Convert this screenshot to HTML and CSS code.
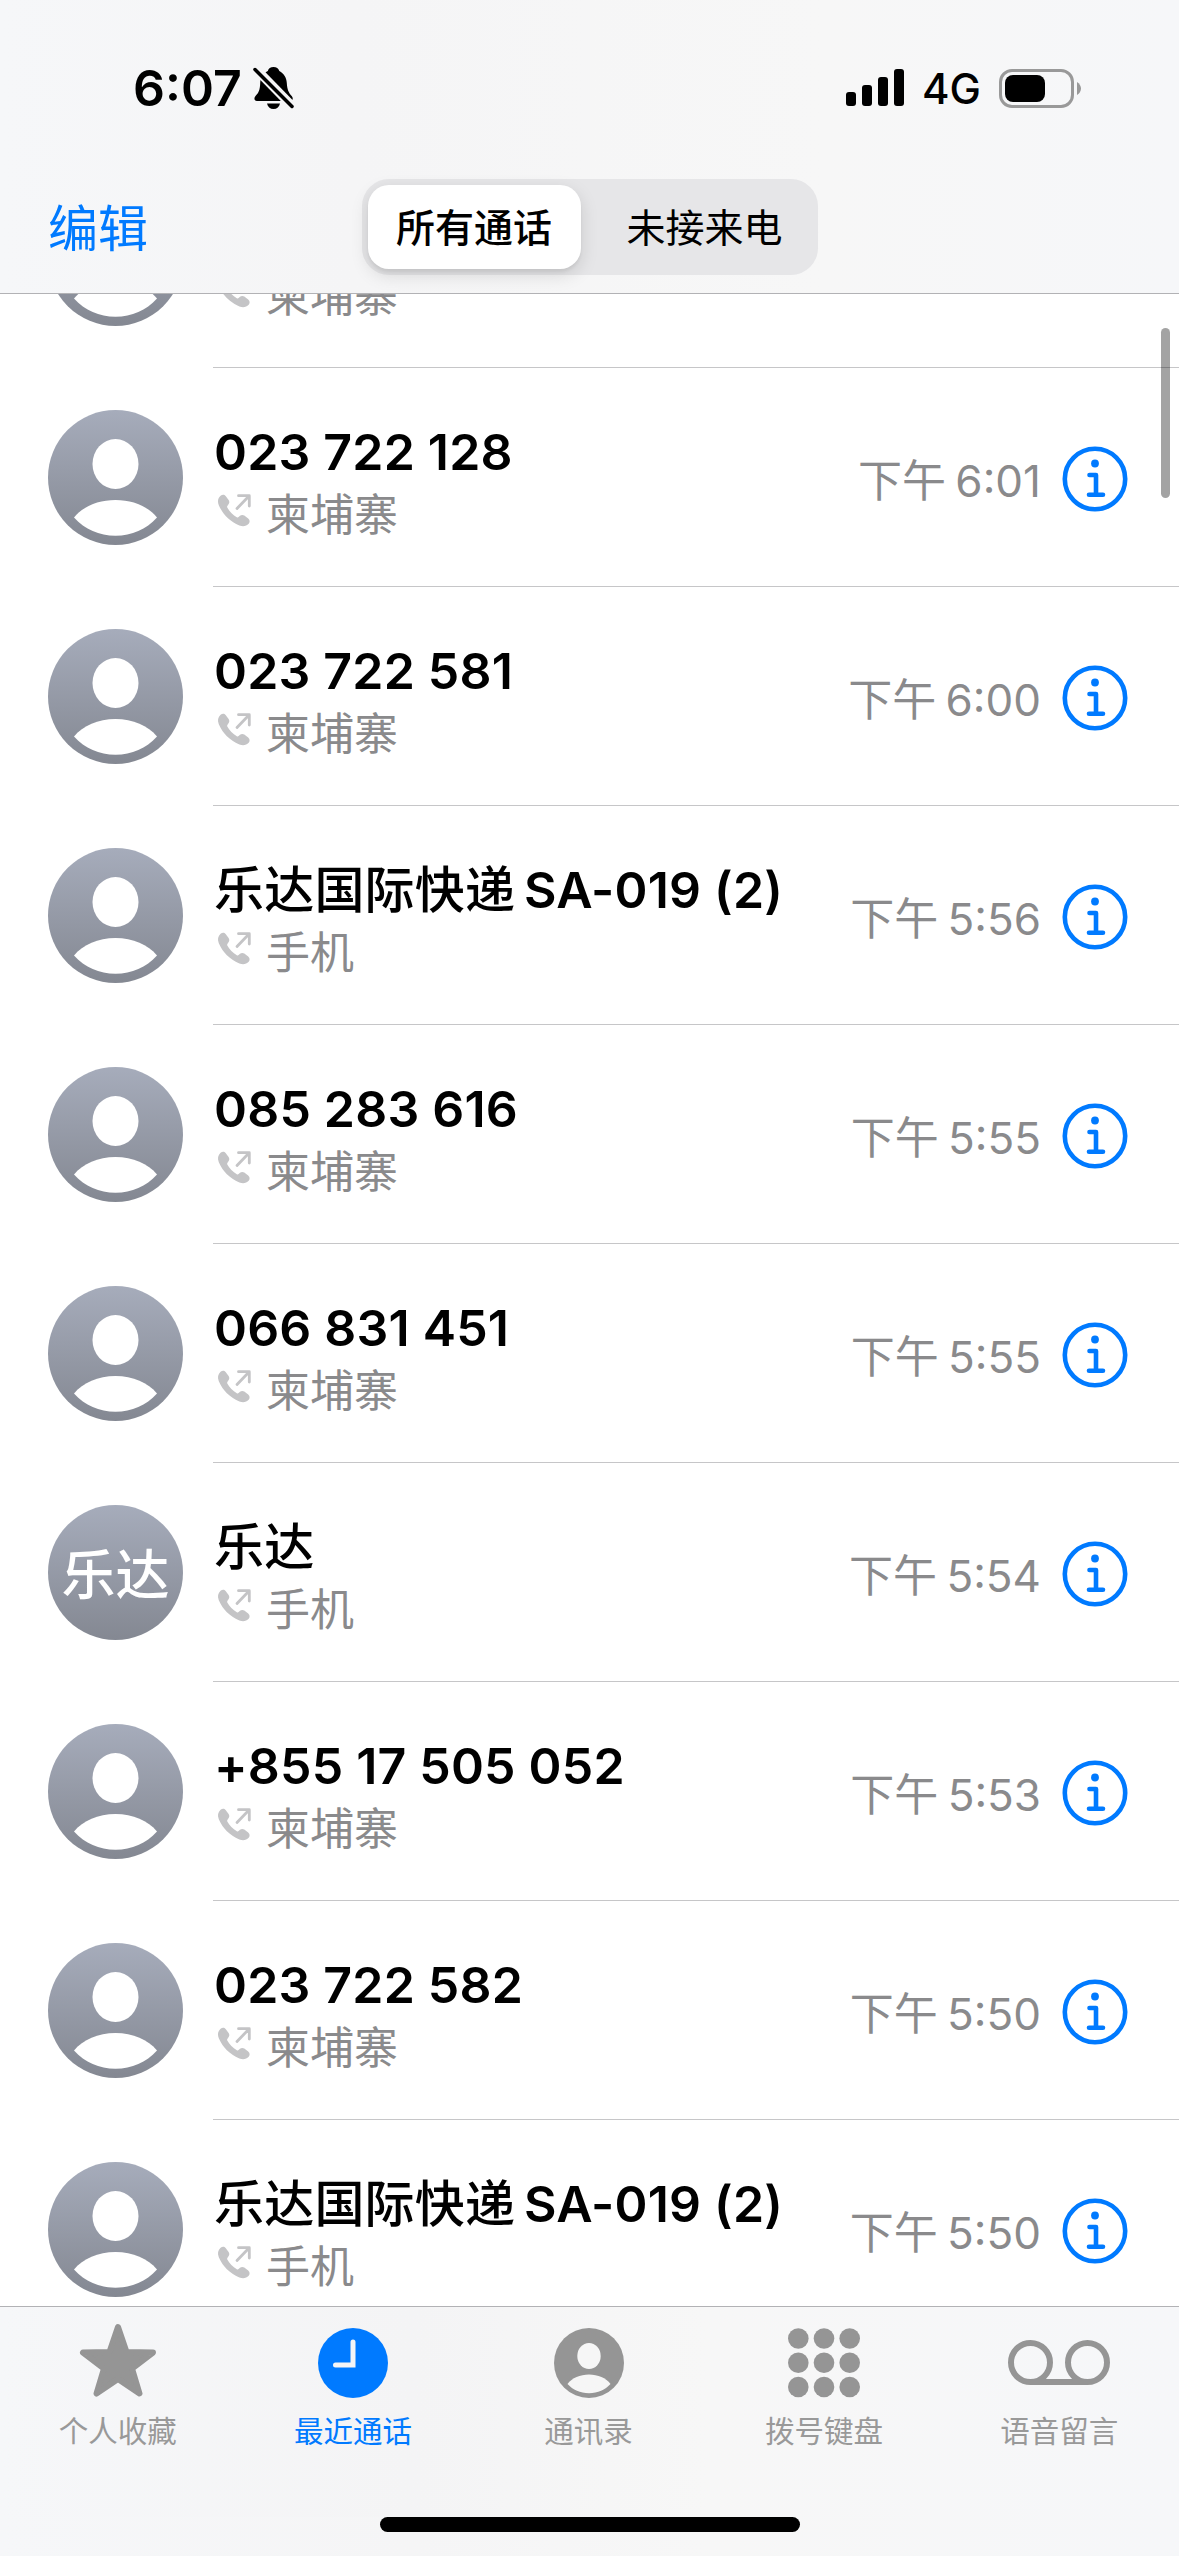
FILE: index.html
```
<!DOCTYPE html>
<html lang="zh-CN">
<head>
  <meta charset="UTF-8">
  <title>最近通话</title>
  <link rel="stylesheet" href="styles.css">
</head>
<body>

  <!-- shared icons -->
  <svg class="defs" width="0" height="0">
    <defs>
      <symbol id="person" viewBox="0 0 135 135">
        <ellipse cx="67.5" cy="54" rx="23" ry="25"/>
        <path d="M26 107.5C35 96.5 50 90 67.5 90S100 96.5 109 107.5C98 119.5 84 125.7 67.5 125.7S37 119.5 26 107.5Z"/>
      </symbol>
      <symbol id="outgoing" viewBox="0 0 34 34">
        <path d="M3.600 1.800C5.200 .3 7.400 .3 8.600 2L11.600 6C12.600 7.600 12.500 9 11.500 10.300L10.500 11.700C10 12.300 10 12.900 10.300 13.500C12.300 17.300 16 21.200 19.800 23.200C20.500 23.600 21.100 23.500 21.600 23L23 21.800C24.400 20.700 25.900 20.700 27.300 21.600L31.200 24.400C32.900 25.800 33.100 28.200 31.700 29.700C29.300 32.200 26.100 32.900 22.400 31.400C12.500 27.200 5.800 20.300 1.800 11.200C.2 7.300 1 4.200 3.600 1.800Z"/>
        <path class="arrow" d="M20 14.500L32 2M21.500 1.700H32.300V12"/>
      </symbol>
      <symbol id="info" viewBox="0 0 66 66">
        <circle class="line" cx="33" cy="33" r="30.200"/>
        <circle cx="33" cy="17.500" r="3.900"/>
        <path class="line" d="M27.500 29H34V48.500M27 48.700H41"/>
      </symbol>
    </defs>
  </svg>

  <header class="nav">
    <div class="status">
      <div class="clock">
        <span>6:07</span>
        <svg class="bell" width="42" height="44" viewBox="0 0 42 44">
          <path d="M20.500 1C17.500 1 15.500 2.500 14.800 5C10 7.500 7.500 11.500 7.200 17C7 24 5.500 27 2.500 30C.8 31.800 1 35 4 35H37C40 35 40.500 32 38.700 30C35.500 26.500 34.200 23.500 33.800 17C33.500 11.500 31 7.500 26.300 5C25.500 2.500 23.500 1 20.500 1Z"/>
          <path d="M14 37.500H27C26.300 41 24 43 20.500 43S14.700 41 14 37.500Z"/>
          <path class="gap" d="M2 2L40 41"/>
          <path class="slash" d="M2 3.500L39 40.500"/>
        </svg>
      </div>
      <div class="signals">
        <svg class="bars" width="58" height="38" viewBox="0 0 58 38">
          <rect x="0" y="23" width="10" height="14" rx="3"/>
          <rect x="16" y="16" width="10" height="21" rx="3"/>
          <rect x="32" y="8" width="10" height="29" rx="3"/>
          <rect x="48" y="0" width="10" height="37" rx="3"/>
        </svg>
        <span class="network">4G</span>
        <svg class="battery" width="83" height="39" viewBox="0 0 83 39">
          <rect class="shell" x="1.500" y="1.500" width="72" height="36" rx="11.500"/>
          <rect x="6" y="6" width="40" height="27" rx="8"/>
          <path class="tip" d="M78 13C80.500 14.500 82 17 82 19.500S80.500 24.500 78 26Z"/>
        </svg>
      </div>
    </div>
    <div class="toolbar">
      <a class="edit">编辑</a>
      <div class="segment">
        <span class="active">所有通话</span>
        <span>未接来电</span>
      </div>
    </div>
  </header>

  <main class="content">
    <ul class="calls" id="calls"></ul>
    <div class="scrollbar"></div>
  </main>

  <nav class="tabbar">
    <div class="tab">
      <svg width="78" height="76" viewBox="0 0 78 76">
        <path class="star" d="M39 4L47.500 29L74 29.500L53 45.500L60.500 70.500L39 56L17.500 70.500L25 45.500L4 29.500L30.500 29Z"/>
      </svg>
      <span>个人收藏</span>
    </div>
    <div class="tab selected">
      <svg width="70" height="76" viewBox="0 0 70 76">
        <circle cx="35" cy="40" r="35"/>
        <path class="hands" d="M35 19V42H17.500"/>
      </svg>
      <span>最近通话</span>
    </div>
    <div class="tab">
      <svg width="70" height="76" viewBox="0 0 70 76">
        <circle cx="35" cy="40" r="35"/>
        <g class="cut">
          <ellipse cx="35" cy="33" rx="11.700" ry="13"/>
          <path d="M13.500 61C18 55 26 51.500 35 51.500S52 55 56.500 61C51 67 44 70.200 35 70.200S19 67 13.500 61Z"/>
        </g>
      </svg>
      <span>通讯录</span>
    </div>
    <div class="tab">
      <svg width="74" height="76" viewBox="0 0 74 76">
        <circle cx="11.300" cy="15.500" r="10.300"/><circle cx="37" cy="15.500" r="10.300"/><circle cx="62.700" cy="15.500" r="10.300"/>
        <circle cx="11.300" cy="39.800" r="10.300"/><circle cx="37" cy="39.800" r="10.300"/><circle cx="62.700" cy="39.800" r="10.300"/>
        <circle cx="11.300" cy="64" r="10.300"/><circle cx="37" cy="64" r="10.300"/><circle cx="62.700" cy="64" r="10.300"/>
      </svg>
      <span>拨号键盘</span>
    </div>
    <div class="tab">
      <svg width="104" height="76" viewBox="0 0 104 76">
        <g class="tape">
          <circle cx="23.500" cy="39.500" r="19.500"/>
          <circle cx="80.500" cy="39.500" r="19.500"/>
          <path d="M23.500 59H80.500"/>
        </g>
      </svg>
      <span>语音留言</span>
    </div>
  </nav>
  <div class="home"><div class="indicator"></div></div>

  <script>
    // the first call is scrolled under the top bar
    const calls = [
      { name: '', label: '柬埔寨', time: '' },
      { name: '023 722 128', label: '柬埔寨', time: '下午 6:01' },
      { name: '023 722 581', label: '柬埔寨', time: '下午 6:00' },
      { name: '<b>乐达国际快递</b> SA-019 (2)', label: '手机', time: '下午 5:56' },
      { name: '085 283 616', label: '柬埔寨', time: '下午 5:55' },
      { name: '066 831 451', label: '柬埔寨', time: '下午 5:55' },
      { name: '<b>乐达</b>', label: '手机', time: '下午 5:54', initials: '乐达' },
      { name: '+855 17 505 052', label: '柬埔寨', time: '下午 5:53' },
      { name: '023 722 582', label: '柬埔寨', time: '下午 5:50' },
      { name: '<b>乐达国际快递</b> SA-019 (2)', label: '手机', time: '下午 5:50' }
    ];

    const list = document.getElementById('calls');

    calls.forEach(function (call) {
      const avatar = call.initials || '<svg width="135" height="135"><use href="#person"/></svg>';
      list.innerHTML += `
        <li class="call">
          <div class="avatar">${avatar}</div>
          <div class="row">
            <div class="who">
              <div class="name">${call.name}</div>
              <div class="label">
                <svg class="outgoing" width="34" height="34"><use href="#outgoing"/></svg>
                <span>${call.label}</span>
              </div>
            </div>
            <div class="time">${call.time}</div>
            <svg class="info" width="66" height="66"><use href="#info"/></svg>
          </div>
        </li>`;
    });
  </script>

</body>
</html>
```
FILE: styles.css
```
* {
  box-sizing: border-box;
}

body {
  margin: 0;
  width: 1179px;
  height: 2556px;
  display: flex;
  flex-direction: column;
  overflow: hidden;
  background: #fff;
  color: #000;
  font-family: Inter, "Noto Sans CJK SC", sans-serif;
  white-space: nowrap;
}

svg {
  display: block;
  flex: none;
}

.defs {
  position: absolute;
}

/* top bar */
.nav {
  flex: none;
  height: 294px;
  background: linear-gradient(90deg, #f6f7f9, #f5f5f6 30%, #f7f7f7 70%, #f6f7f9);
  border-bottom: 1px solid #b2b2b5;
}

.status {
  height: 179px;
  display: flex;
  justify-content: space-between;
  align-items: flex-start;
  padding: 66px 97px 0 133px;
}

.clock,
.signals {
  display: flex;
  align-items: center;
  height: 44px;
}

.clock {
  font-size: 50px;
  font-weight: 600;
  gap: 11px;
}

.gap {
  fill: none;
  stroke: #f5f5f6;
  stroke-width: 9;
}

.slash {
  fill: none;
  stroke: #000;
  stroke-width: 3.5;
  stroke-linecap: round;
}

.network {
  font-size: 42px;
  font-weight: 500;
  margin: 1px 18px 0;
}

.shell {
  fill: none;
  stroke: #999;
  stroke-width: 3;
}

.tip {
  fill: #999;
}

.toolbar {
  height: 96px;
  display: grid;
  grid-template-columns: 1fr 456px 1fr;
  align-items: center;
}

.edit {
  padding: 0 0 5px 48px;
  color: #007aff;
  font-size: 50px;
}

.segment {
  height: 96px;
  display: flex;
  padding: 6px;
  border-radius: 27px;
  background: #e6e6e8;
  font-size: 39px;
}

.segment span {
  flex: 1;
  height: 84px;
  line-height: 85px;
  text-align: center;
  padding-left: 17px;
}

.segment .active {
  flex: none;
  width: 213px;
  padding: 0;
  border-radius: 21px;
  background: #fff;
  font-weight: 500;
  box-shadow: 0 6px 18px rgba(0, 0, 0, .13), 0 3px 3px rgba(0, 0, 0, .05);
}

/* call list */
.content {
  flex: none;
  position: relative;
  height: 2012px;
  overflow: hidden;
}

.calls {
  list-style: none;
  margin: -145px 0 0;
  padding: 0 0 0 48px;
}

.call {
  display: flex;
  align-items: center;
  gap: 30px;
  height: 219px;
}

.avatar {
  flex: none;
  width: 135px;
  height: 135px;
  border-radius: 50%;
  background: linear-gradient(#a6acbb, #848892);
  color: #fff;
  fill: #fff;
  font-size: 54px;
  font-weight: 500;
  line-height: 142px;
  text-align: center;
}

.row {
  flex: 1;
  display: flex;
  align-items: center;
  height: 219px;
  padding: 3px 51px 0 0;
  border-bottom: 1px solid #c6c6c8;
}

.who {
  flex: 1;
  padding-top: 6px;
}

.name {
  height: 60px;
  line-height: 62px;
  font-size: 50px;
  font-weight: 600;
  padding-left: 1px;
  letter-spacing: .2px;
}

.name b {
  font-weight: 500;
  margin-right: -4px;
}

.label {
  display: flex;
  align-items: center;
  height: 62px;
  gap: 15px;
  color: #8a8a8c;
  font-size: 44px;
}

.outgoing {
  fill: #c4c4c6;
  margin: -1px 0 0 4px;
}

.arrow {
  fill: none;
  stroke: #c4c4c6;
  stroke-width: 2.8;
  stroke-linecap: round;
  stroke-linejoin: round;
}

.time {
  margin: -2px 21px 0 0;
  color: #8a8a8c;
  font-size: 44px;
  word-spacing: -3px;
}

.info {
  fill: #007aff;
}

.line {
  fill: none;
  stroke: #007aff;
  stroke-width: 4.6;
  stroke-linecap: round;
  stroke-linejoin: round;
}

.scrollbar {
  position: absolute;
  top: 34px;
  right: 9px;
  width: 9px;
  height: 170px;
  border-radius: 5px;
  background: rgba(0, 0, 0, .36);
}

/* bottom bar */
.tabbar {
  flex: none;
  display: flex;
  height: 211px;
  padding: 16px 2px 0 0;
  border-top: 1px solid #b2b2b5;
  background: linear-gradient(90deg, #f6f7f9, #f4f4f5 35%, #f7f7f7 60%, #f6f7f9);
}

.tab {
  flex: 1;
  display: flex;
  flex-direction: column;
  align-items: center;
  gap: 11px;
  color: #999;
  fill: #959595;
  font-size: 29.5px;
  line-height: 42px;
}

.selected {
  color: #007aff;
  fill: #007aff;
}

.star {
  stroke: #959595;
  stroke-width: 6;
  stroke-linejoin: round;
}

.hands {
  fill: none;
  stroke: #f5f5f6;
  stroke-width: 5;
  stroke-linecap: round;
}

.cut {
  fill: #f6f6f6;
}

.tape {
  fill: none;
  stroke: #959595;
  stroke-width: 6;
}

.home {
  flex: 1;
  background: linear-gradient(90deg, #f6f7f9, #f5f5f6 35%, #f7f7f7 60%, #f6f7f9);
}

.indicator {
  width: 420px;
  height: 15px;
  margin: 0 auto;
  border-radius: 8px;
  background: #000;
}
```
